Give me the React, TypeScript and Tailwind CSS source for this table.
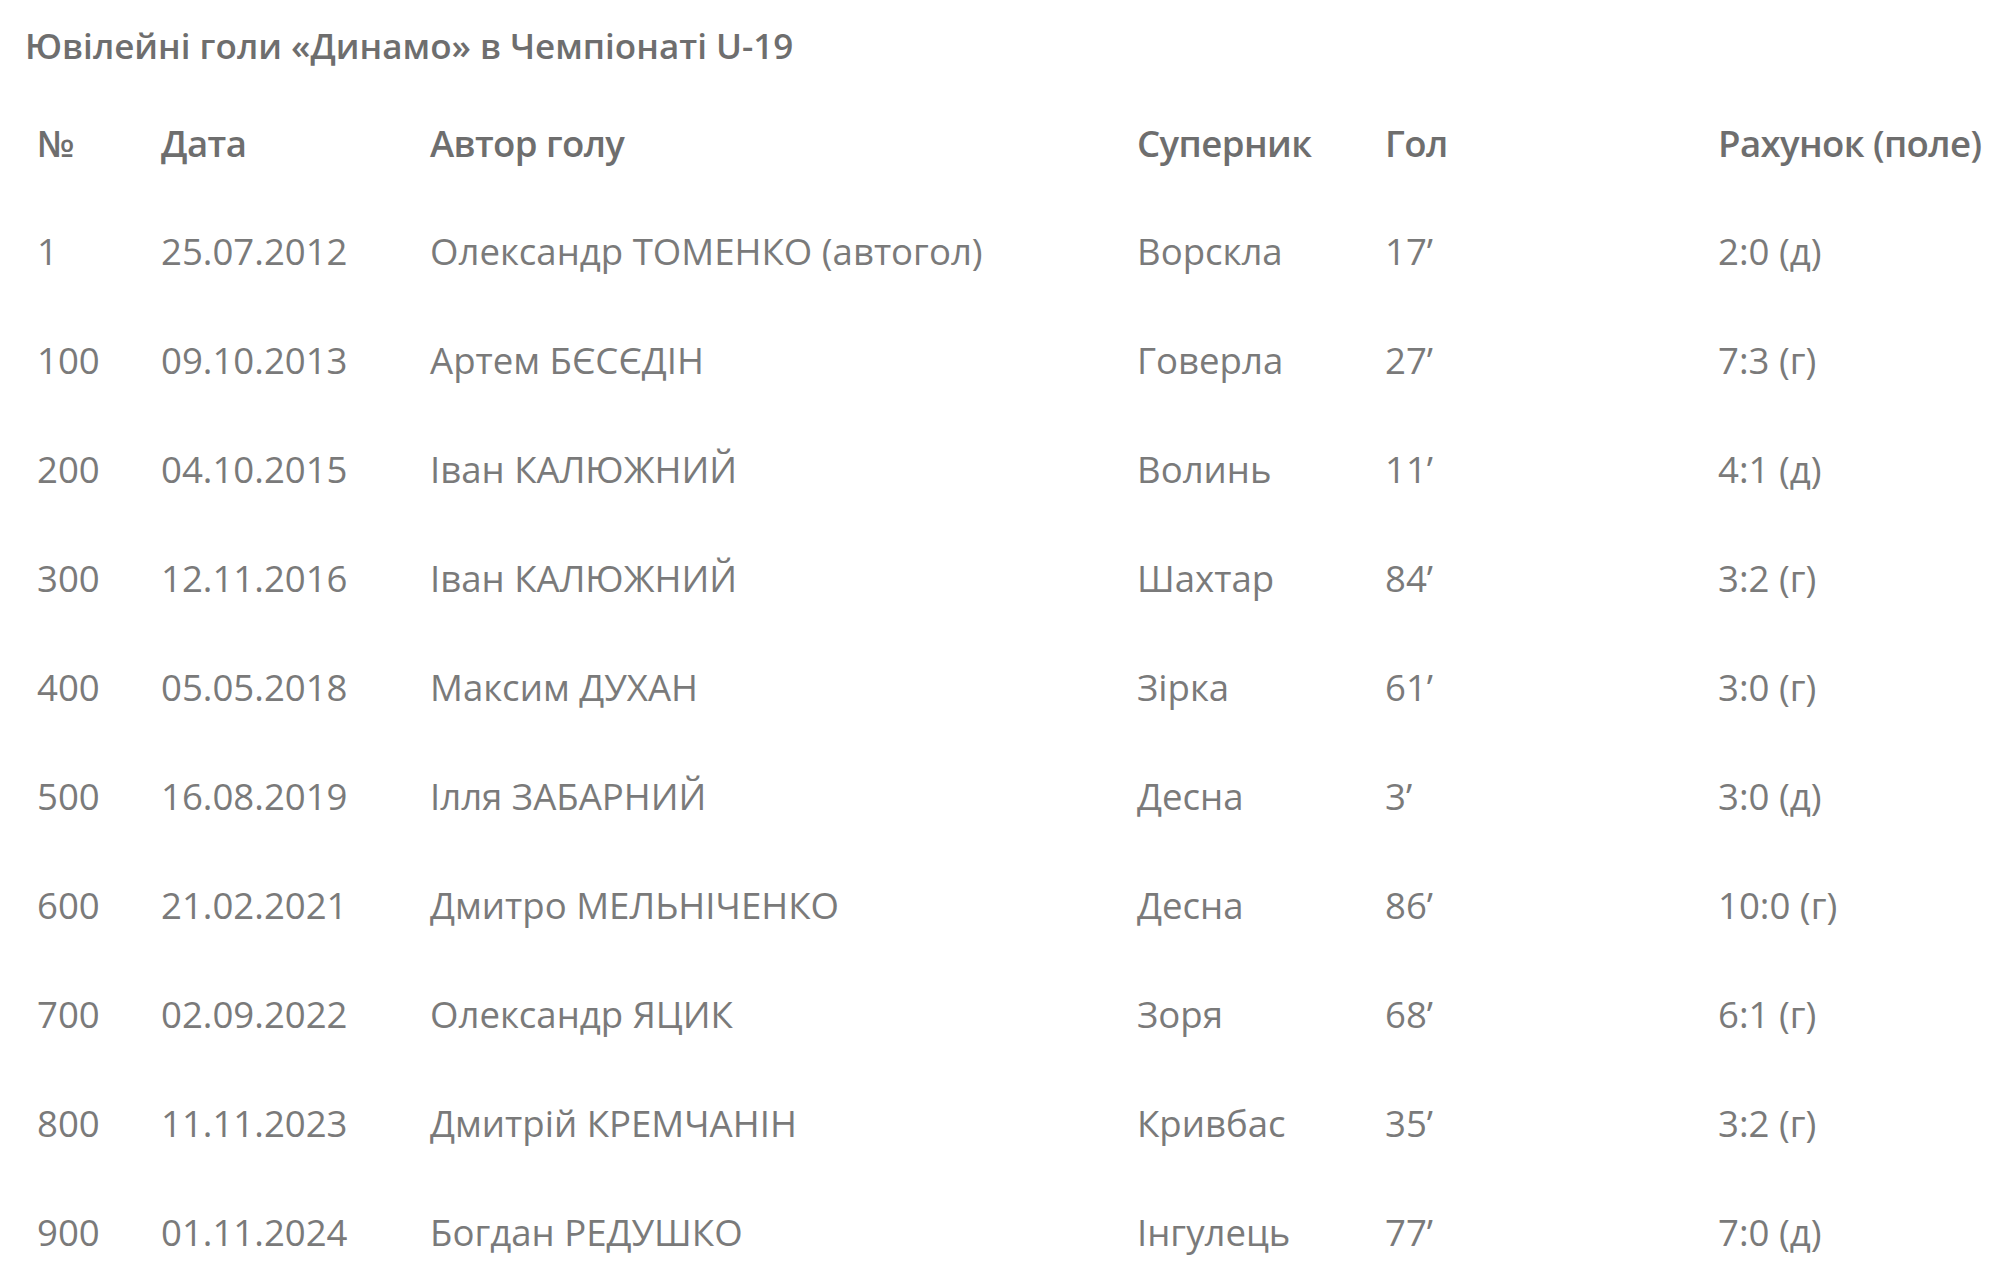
const rows = [
  ["1", "25.07.2012", "Олександр ТОМЕНКО (автогол)", "Ворскла", "17’", "2:0 (д)"],
  ["100", "09.10.2013", "Артем БЄСЄДІН", "Говерла", "27’", "7:3 (г)"],
  ["200", "04.10.2015", "Іван КАЛЮЖНИЙ", "Волинь", "11’", "4:1 (д)"],
  ["300", "12.11.2016", "Іван КАЛЮЖНИЙ", "Шахтар", "84’", "3:2 (г)"],
  ["400", "05.05.2018", "Максим ДУХАН", "Зірка", "61’", "3:0 (г)"],
  ["500", "16.08.2019", "Ілля ЗАБАРНИЙ", "Десна", "3’", "3:0 (д)"],
  ["600", "21.02.2021", "Дмитро МЕЛЬНІЧЕНКО", "Десна", "86’", "10:0 (г)"],
  ["700", "02.09.2022", "Олександр ЯЦИК", "Зоря", "68’", "6:1 (г)"],
  ["800", "11.11.2023", "Дмитрій КРЕМЧАНІН", "Кривбас", "35’", "3:2 (г)"],
  ["900", "01.11.2024", "Богдан РЕДУШКО", "Інгулець", "77’", "7:0 (д)"],
];

const headers = ["№", "Дата", "Автор голу", "Суперник", "Гол", "Рахунок (поле)"];

// ширини колонок разом з падінгом комірки
const cols = "grid grid-cols-[124px_269px_707px_248px_333px_1fr]";

export default function App() {
  return (
    <div className="min-h-screen bg-white px-[25px] font-['Open_Sans',sans-serif] text-[36.6px] text-[#7a7a7a]">
      {/* ---- ЗАГОЛОВОК ---- */}
      <h1 className="flex h-[89px] items-center pt-1 text-[35px] font-semibold text-[#6e6e6e]">
        Ювілейні голи «Динамо» в Чемпіонаті U-19
      </h1>

      {/* ---- ТАБЛИЦЯ ---- */}
      <div className={`${cols} h-[108px] items-center font-semibold tracking-[-0.6px] text-[#6e6e6e]`}>
        {headers.map((h) => (
          <div key={h} className="whitespace-nowrap px-3">
            {h}
          </div>
        ))}
      </div>

      {rows.map((r) => (
        <div key={r[0]} className={`${cols} h-[109px] items-center`}>
          {r.map((c, i) => (
            <div key={i} className="whitespace-nowrap px-3">
              {c}
            </div>
          ))}
        </div>
      ))}
    </div>
  );
}
